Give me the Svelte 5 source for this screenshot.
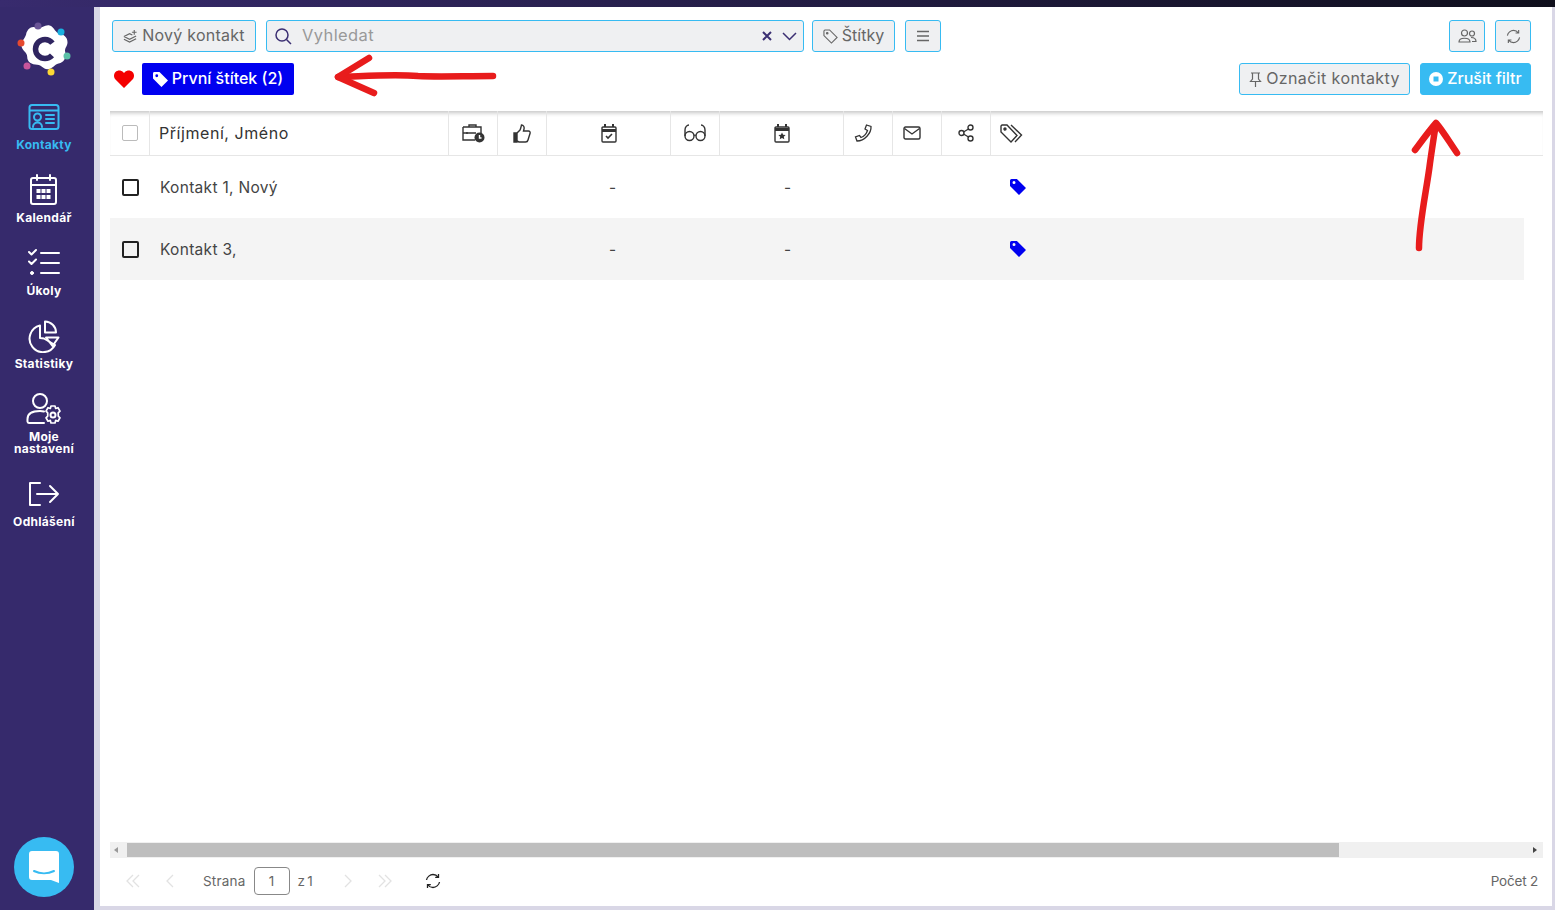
<script>
  const nav = [
    { id: 'contacts', label: 'Kontakty', active: true },
    { id: 'calendar', label: 'Kalendář' },
    { id: 'tasks', label: 'Úkoly' },
    { id: 'stats', label: 'Statistiky' },
    { id: 'settings', label: 'Moje nastavení' },
    { id: 'logout', label: 'Odhlášení' }
  ];
  const rows = ['Kontakt 1, Nový', 'Kontakt 3,'];
  const dots = [
    [38, 26, '#6a5596'], [61, 32, '#19b0e0'], [67, 56, '#5cc0a8'],
    [51, 72, '#fdd835'], [27, 66, '#c9559b'], [21, 43, '#e5492f']
  ];
</script>

<div class="page">
  <div class="topline"></div>
  <div class="frame">
    <aside class="side">
      <svg class="logo" width="88" height="60" viewBox="0 20 88 60">
        <path fill="#fff" transform="translate(44 49) scale(1.12) translate(-44 -49)" d="M37 30c4 2 7-3 12-2 4 1 4 5 8 7 4 1 8 3 8 8 0 4-3 5-2 9 1 5-1 9-6 10-4 1-5 5-10 5-4 0-5-4-9-4-5 0-9-2-9-7 0-4-4-5-5-9-1-5 3-7 4-11 1-5 5-8 9-6z" />
        <circle cx="45" cy="49" r="9.500" fill="none" stroke="#2f2560" stroke-width="5.500" stroke-dasharray="46 13.700" stroke-dashoffset="-7" />
        {#each dots as d}
          <circle cx={d[0]} cy={d[1]} r="3.500" fill={d[2]} />
        {/each}
      </svg>

      {#each nav as n}
        <div class="nav" class:active={n.active}>
          <svg width="36" height="34" viewBox="0 0 36 34" fill="none" stroke="currentColor" stroke-width="2" stroke-linecap="round" stroke-linejoin="round">
            {#if n.id === 'contacts'}
              <rect x="3.500" y="5" width="29" height="24" rx="2.500" />
              <path d="M4 10.500h28M15 17a3.500 3.500 0 1 1-7 0 3.500 3.500 0 0 1 7 0zM7 27c0-6 9-6 9 0M20 15h8M20 19h8M20 23h8" />
            {:else if n.id === 'calendar'}
              <rect x="5" y="5" width="25" height="26" rx="2" />
              <path d="M5 12h25M11 2v5M24 2v5" />
              <g fill="currentColor" stroke="none">
                <rect x="10.500" y="16" width="4" height="4" /><rect x="15.500" y="16" width="4" height="4" /><rect x="20.500" y="16" width="4" height="4" />
                <rect x="10.500" y="22" width="4" height="4" /><rect x="15.500" y="22" width="4" height="4" /><rect x="20.500" y="22" width="4" height="4" />
              </g>
            {:else if n.id === 'tasks'}
              <path d="M15 7h18M15 17h18M15 27h18M3 6l2.500 2.500L10 4M3 15.500L5.500 18 10 13.500" />
              <circle cx="6" cy="27" r="1.500" fill="currentColor" stroke-width="1" />
            {:else if n.id === 'stats'}
              <path d="M14 6.500A13.500 13.500 0 1 0 29 26L18 19.500 14 19z" />
              <path d="M19 2.500c6 0 11 5 11 11H19zM20 18.500h12.500L26.500 27z" />
            {:else if n.id === 'settings'}
              <circle cx="14" cy="9" r="7" />
              <path d="M3 31c-2 0-1.500-3-1.500-4 0-6 6-8 12.500-8 1.500 0 3 .2 4 .5M3 31h15" />
              <circle cx="27" cy="23" r="2.500" />
              <path stroke-width="1.700" d="M25 14h4l.7 2.500 2.300-.8 2 3.400-1.800 1.800.1 3.200 1.700 1.700-2 3.400-2.300-.8-.7 2.600h-4l-.7-2.600-2.300.8-2-3.400 1.700-1.700v-3.200l-1.700-1.800 2-3.400 2.300.8z" />
            {:else}
              <path d="M14 6H4v22h10M11 17h21M24 9l8 8-8 8" />
            {/if}
          </svg>
          <span>{n.label}</span>
        </div>
      {/each}

      <div class="chat">
        <svg width="30" height="32" viewBox="0 0 30 32">
          <path fill="#fff" d="M3 0h24a3 3 0 0 1 3 3v29l-8-3H3a3 3 0 0 1-3-3V3a3 3 0 0 1 3-3z" />
          <path fill="none" stroke="#37bbf2" stroke-width="2" stroke-linecap="round" d="M5 20c6 3 14 3 20 0" />
        </svg>
      </div>
    </aside>

    <main class="main">
      <div class="toolbar">
        <div class="row">
          <button class="btn add">
            <svg width="15" height="15" viewBox="0 0 16 16" fill="none" stroke="currentColor" stroke-width="1.200">
              <path d="M1 8l6-3 3 1.500M1 8l6 3 7-3.500M1 11l6 3 7-3.500M1 8v0M12 1v5M9.500 3.500h5" />
            </svg>
            Nový kontakt
          </button>
          <div class="search">
            <svg class="purple" width="18" height="18" viewBox="0 0 18 18" fill="none" stroke="currentColor" stroke-width="1.500">
              <circle cx="8" cy="8" r="6" /><path d="M12.500 12.500L17 17" />
            </svg>
            <span class="placeholder">Vyhledat</span>
            <svg class="purple" width="12" height="12" viewBox="0 0 12 12" fill="none" stroke="currentColor" stroke-width="2">
              <path d="M2 2l8 8M10 2l-8 8" />
            </svg>
            <svg class="purple" width="15" height="9" viewBox="0 0 15 9" fill="none" stroke="currentColor" stroke-width="1.500">
              <path d="M1 1l6.500 6.500L14 1" />
            </svg>
          </div>
          <button class="btn tags">
            <svg width="15" height="15" viewBox="0 0 16 16" fill="none" stroke="currentColor" stroke-width="1.200">
              <path d="M1 2v5l8 8 6-6-8-8H2z" /><circle cx="4.500" cy="4.500" r=".8" fill="currentColor" />
            </svg>
            Štítky
          </button>
          <button class="btn square menu" aria-label="Menu">
            <svg width="14" height="12" viewBox="0 0 14 12" stroke="currentColor" stroke-width="1.300"><path d="M1 1.500h12M1 6h12M1 10.500h12" /></svg>
          </button>
          <span class="grow"></span>
          <button class="btn square" aria-label="Uživatelé">
            <svg width="19" height="14" viewBox="0 0 19 14" fill="none" stroke="currentColor" stroke-width="1.200">
              <circle cx="6.500" cy="4" r="3" /><circle cx="14" cy="4.500" r="2.500" />
              <path d="M1 13c0-5 11-5 11 0zM13 8.500c3 0 5 1 5 4h-4" />
            </svg>
          </button>
          <button class="btn square" aria-label="Obnovit">
            <svg width="15" height="15" viewBox="0 0 16 16" fill="none" stroke="currentColor" stroke-width="1.200">
              <path d="M1.500 7C2 4 5 1.500 8 1.500c2.500 0 4 1 5 2.500M13.500 1v3.300h-3.300M14.500 9c-.5 3-3.500 5.500-6.500 5.500-2.500 0-4-1-5-2.500M2.500 15v-3.300h3.300" />
            </svg>
          </button>
        </div>
        <div class="row">
          <svg class="heart" width="20" height="18" viewBox="0 0 20 18">
            <path fill="#f40000" d="M10 18L1.500 9.500C-.5 7.500-.5 4 1.500 2s5.500-2 7.500 0l1 1 1-1c2-2 5.500-2 7.500 0s2 5.500 0 7.500z" />
          </svg>
          <button class="chip">
            <svg width="15" height="15" viewBox="0 0 16 16"><path fill="#fff" fill-rule="evenodd" d="M0 1.500A1.500 1.500 0 0 1 1.500 0h5.400L16 9l-7 7L0 7zM4 5.500a1.500 1.500 0 1 0 0-3 1.500 1.500 0 0 0 0 3z" /></svg>
            První štítek (2)
          </button>
          <span class="grow"></span>
          <button class="btn mark">
            <svg width="13" height="15" viewBox="0 0 13 15" fill="none" stroke="currentColor" stroke-width="1.200">
              <path d="M2 1h9M3.500 1v6L1.500 9.500h10L9.500 7V1M6.500 9.500V15" />
            </svg>
            Označit kontakty
          </button>
          <button class="btn clear">
            <svg width="14" height="14" viewBox="0 0 14 14"><path fill="#fff" fill-rule="evenodd" d="M7 0a7 7 0 1 1 0 14A7 7 0 0 1 7 0zM4.500 4.500v5h5v-5z" /></svg>
            Zrušit filtr
          </button>
        </div>
      </div>

      <div class="table">
        <div class="thead">
          <div class="cell check"><span class="box light"></span></div>
          <div class="cell name">Příjmení, Jméno</div>
          <div class="cell"><svg width="24" height="20" viewBox="0 0 24 20" fill="none" stroke="#333" stroke-width="1.400"><path d="M8 4V2h7v2M2 4h18v6M2 4v13h12M2 10h13M6 9v2" /><circle cx="18.500" cy="14.500" r="5" fill="#333" stroke="none" /><path stroke="#fff" d="M18.500 12v3h2" /></svg></div>
          <div class="cell"><svg width="18" height="19" viewBox="0 0 18 19" fill="none" stroke="#333" stroke-width="1.400"><path fill="#333" d="M1 9h3v9H1z" /><path d="M4 9l3-3c1-2 1-3 1.500-5 2 0 3 2 2.500 4l-.5 2h5c1 0 2 1 1.500 2.500L15 16c-.3 1.500-1 2-2.500 2H6l-2-1" /></svg></div>
          <div class="cell"><svg width="16" height="19" viewBox="0 0 16 19" fill="none" stroke="#333" stroke-width="1.400"><rect x="1" y="3" width="14" height="15" rx="1" /><path d="M1 6.500h14" stroke-width="3" /><path d="M4 0v3M12 0v3" stroke-width="2" /><path d="M5 12l2 2 4-4" stroke-width="1.600" /></svg></div>
          <div class="cell"><svg width="22" height="18" viewBox="0 0 22 18" fill="none" stroke="#333" stroke-width="1.400"><circle cx="5.500" cy="12" r="4.500" /><circle cx="16.500" cy="12" r="4.500" /><path d="M10 11.500c1-.8 1-.8 2 0M1 12V6c0-3 2-5 4-5M21 12V6c0-3-2-5-4-5" /></svg></div>
          <div class="cell"><svg width="16" height="19" viewBox="0 0 16 19" fill="none" stroke="#333" stroke-width="1.400"><rect x="1" y="3" width="14" height="15" rx="1" /><path d="M1 5.500h14" stroke-width="3" /><path d="M4 0v3M12 0v3" stroke-width="2" /><path fill="#333" stroke="none" d="M8 8.500l1.100 2.300 2.500.3-1.800 1.700.5 2.500L8 14l-2.300 1.300.5-2.500-1.800-1.700 2.500-.3z" /></svg></div>
          <div class="cell nudge"><svg width="19" height="18" viewBox="0 0 18 18" fill="none" stroke="#333" stroke-width="1.300"><path d="M12 1l4.500 1.500C17 9 10 17 2.500 17L1 13l4-1.500 1.500 2c3-1 5.500-4 6.500-7L10.500 5z" /></svg></div>
          <div class="cell nudge"><svg width="18" height="14" viewBox="0 0 18 14" fill="none" stroke="#333" stroke-width="1.400"><rect x="1" y="1" width="16" height="12" rx="1.500" /><path d="M1.500 2.500L9 8l7.500-5.500" /></svg></div>
          <div class="cell"><svg width="16" height="18" viewBox="0 0 16 18" fill="none" stroke="#333" stroke-width="1.400"><circle cx="12.500" cy="3.500" r="2.500" /><circle cx="3.500" cy="9" r="2.500" /><circle cx="12.500" cy="14.500" r="2.500" /><path d="M5.500 8l5-3M5.500 10l5 3" /></svg></div>
          <div class="cell"><svg width="23" height="19" viewBox="0 0 23 19" fill="none" stroke="#333" stroke-width="1.400"><path d="M1 2v6l10 10 6-6.500L7 1H2zM11 1l10.500 10L15 18" /><circle cx="5" cy="5" r="1" fill="#333" /></svg></div>
        </div>

        {#each rows as r, i}
          <div class="trow" class:odd={i % 2 === 1}>
            <div class="c-check"><span class="box"></span></div>
            <div class="c-name">{r}</div>
            <div class="c-dash first">-</div>
            <div class="c-dash second">-</div>
            <svg class="rowtag" width="16" height="16" viewBox="0 0 16 16"><path fill="#0000f0" fill-rule="evenodd" d="M0 1.500A1.500 1.500 0 0 1 1.500 0h5.400L16 9l-7 7L0 7zM4 5a1.500 1.500 0 1 0 0-3 1.500 1.500 0 0 0 0 3z" /></svg>
          </div>
        {/each}
      </div>

      <div class="hscroll">
        <span class="tri left"></span>
        <div class="track"><div class="thumb"></div></div>
        <span class="tri right"></span>
      </div>

      <footer class="pager">
        <svg class="off first" width="14" height="14" viewBox="0 0 14 14" fill="none" stroke="currentColor" stroke-width="1.300"><path d="M7 1L1 7l6 6M13 1L7 7l6 6" /></svg>
        <svg class="off prev" width="8" height="14" viewBox="0 0 8 14" fill="none" stroke="currentColor" stroke-width="1.300"><path d="M7 1L1 7l6 6" /></svg>
        <span class="lbl">Strana</span>
        <span class="pageno">1</span>
        <span class="lbl of">z 1</span>
        <svg class="off next" width="8" height="14" viewBox="0 0 8 14" fill="none" stroke="currentColor" stroke-width="1.300"><path d="M1 1l6 6-6 6" /></svg>
        <svg class="off last" width="14" height="14" viewBox="0 0 14 14" fill="none" stroke="currentColor" stroke-width="1.300"><path d="M1 1l6 6-6 6M7 1l6 6-6 6" /></svg>
        <svg class="reload" width="16" height="16" viewBox="0 0 16 16" fill="none" stroke="#222" stroke-width="1.300"><path d="M1.500 7C2 4 5 1.500 8 1.500c2.500 0 4 1 5 2.500M13.500 1v3.300h-3.300M14.500 9c-.5 3-3.500 5.500-6.500 5.500-2.500 0-4-1-5-2.500M2.500 15v-3.300h3.300" /></svg>
        <span class="grow"></span>
        <span class="lbl count">Počet 2</span>
      </footer>
    </main>
  </div>

  <!-- red arrows painted over the screenshot -->
  <svg class="marks" width="1555" height="910" fill="none" stroke="#e81c1c" stroke-width="6.500" stroke-linecap="round" stroke-linejoin="round">
    <path d="M493 76c-30 0-55 1-75 0-25-2-50 0-80 1" />
    <path d="M369 58l-31 19 36 16" />
    <path d="M1419 248c0-25 8-60 11-85 2-14 4-28 6-39" />
    <path d="M1415 150c6-8 14-19 21-27 7 8 14 20 21 30" />
  </svg>
</div>

<style>
  :global(body) {
    margin: 0;
    font-family: Inter, "Liberation Sans", sans-serif;
    color: #333;
  }

  .page {
    position: relative;
    width: 1555px;
    height: 910px;
    overflow: hidden;
    background: #d9d7e6;
  }

  .topline {
    height: 7px;
    background: linear-gradient(90deg, #382b6e, #0f0f1c);
  }

  .frame {
    display: flex;
    height: 903px;
  }

  .side {
    flex: 0 0 94px;
    box-sizing: border-box;
    padding-right: 6px;
    display: flex;
    flex-direction: column;
    align-items: center;
    background: #362a6c;
    color: #fff;
  }

  .logo {
    margin-top: 13px;
    margin-bottom: 20px;
  }

  .nav {
    display: flex;
    flex-direction: column;
    align-items: center;
    width: 88px;
    margin-bottom: 22px;
    font-size: 12px;
    line-height: 12px;
    font-weight: 700;
    text-align: center;
  }

  .nav span {
    display: block;
    width: 70px;
    margin-top: 5px;
    letter-spacing: 0.3px;
  }

  .nav.active {
    color: #37bbf2;
  }

  .chat {
    margin-top: auto;
    margin-bottom: 13px;
    width: 60px;
    height: 60px;
    border-radius: 50%;
    background: #37bbf2;
    display: flex;
    align-items: center;
    justify-content: center;
  }

  .main {
    flex: 0 0 1452px;
    margin-left: 6px;
    margin-bottom: 4px;
    background: #fff;
    display: flex;
    flex-direction: column;
    padding: 0 9px 0 10px;
    box-sizing: border-box;
  }

  .toolbar {
    height: 104px;
    padding: 13px 12px 0 2px;
    box-sizing: border-box;
    display: flex;
    flex-direction: column;
    gap: 11px;
  }

  .row {
    display: flex;
    align-items: center;
    height: 32px;
    gap: 10px;
  }

  .grow {
    flex: 1;
  }

  .btn {
    height: 32px;
    display: inline-flex;
    align-items: center;
    justify-content: center;
    gap: 4px;
    padding: 0 0 2px;
    border: 1px solid #37bbf2;
    border-radius: 3px;
    background: #eff0f2;
    color: #666;
    font: 400 16px Inter, "Liberation Sans", sans-serif;
    box-sizing: border-box;
    white-space: nowrap;
  }

  .btn svg {
    margin-top: 2px;
  }

  .btn.add {
    width: 144px;
    letter-spacing: 0.25px;
  }

  .btn.square {
    width: 36px;
    padding: 0;
  }

  .btn.square svg {
    margin-top: 0;
  }

  .btn.mark {
    width: 171px;
    letter-spacing: 0.4px;
  }

  .btn.clear {
    width: 111px;
    background: #37bbf2;
    color: #fff;
    font-weight: 500;
  }

  .btn.tags {
    width: 83px;
    margin-left: -2px;
  }

  .search {
    width: 538px;
    height: 32px;
    display: flex;
    align-items: center;
    gap: 9px;
    padding: 0 6px 0 7px;
    border: 1px solid #37bbf2;
    border-radius: 3px;
    background: #eff0f2;
    box-sizing: border-box;
  }

  .purple {
    color: #3b2f73;
    flex: none;
  }

  .placeholder {
    flex: 1;
    margin-left: 1px;
    padding-bottom: 2px;
    color: #999;
    font-size: 16.500px;
    letter-spacing: 0.4px;
  }

  .heart {
    margin-left: 2px;
    margin-right: -2px;
  }

  .chip {
    height: 32px;
    width: 152px;
    display: inline-flex;
    align-items: center;
    justify-content: center;
    gap: 4px;
    padding: 0 0 2px;
    border: 0;
    border-radius: 2px;
    background: #0000f0;
    color: #fff;
    font: 500 16px Inter, "Liberation Sans", sans-serif;
  }

  .chip svg {
    margin-top: 2px;
  }

  .table {
    flex: 1;
    min-height: 0;
    display: flex;
    flex-direction: column;
  }

  .thead {
    display: grid;
    grid-template-columns: 40px 299px 49px 49px 124px 49px 124px 49px 49px 49px 49px;
    height: 45px;
    border-bottom: 1px solid #e6e6e6;
    box-shadow: inset 0 5px 4px -3px #c4c4c4;
    box-sizing: border-box;
    flex: none;
  }

  .cell {
    display: flex;
    align-items: center;
    justify-content: center;
    border-right: 1px solid #e6e6e6;
  }

  .cell.nudge {
    padding-right: 10px;
  }

  .cell:last-child {
    border-right: 0;
    justify-content: flex-start;
    padding-left: 9px;
  }

  .cell.name {
    justify-content: flex-start;
    padding-left: 9px;
    font-size: 16px;
    letter-spacing: 0.55px;
    color: #333;
  }

  .box {
    display: block;
    width: 13px;
    height: 13px;
    border: 2px solid #222;
    border-radius: 2px;
  }

  .box.light {
    width: 14px;
    height: 14px;
    border: 1px solid #bbb;
  }

  .trow {
    position: relative;
    display: grid;
    grid-template-columns: 40px 299px 124px 176px;
    align-items: center;
    height: 62px;
    width: 1414px;
    flex: none;
    font-size: 15.500px;
    color: #444;
  }

  .trow.odd {
    background: #f4f4f4;
  }

  .c-check {
    display: flex;
    justify-content: center;
    margin-left: 1px;
  }

  .c-name {
    padding-left: 10px;
    letter-spacing: 0.3px;
  }

  .c-dash.first {
    padding-left: 160px;
    width: 80px;
  }

  .c-dash.second {
    padding-left: 211px;
  }

  .rowtag {
    position: absolute;
    left: 900px;
    top: 23px;
  }

  .hscroll {
    display: flex;
    align-items: center;
    height: 16px;
    background: #f0f0f0;
    flex: none;
  }

  .track {
    flex: 1;
    height: 14px;
    margin-left: 9px;
    margin-right: 0;
  }

  .thumb {
    width: 1212px;
    height: 100%;
    background: #bebebe;
  }

  .tri {
    flex: none;
    width: 0;
    height: 0;
    border-top: 3.500px solid transparent;
    border-bottom: 3.500px solid transparent;
  }

  .tri.left {
    margin-left: 4px;
    border-right: 4px solid #999;
  }

  .tri.right {
    margin-right: 6px;
    margin-left: 190px;
    border-left: 4px solid #444;
  }

  .pager {
    height: 48px;
    flex: none;
    display: flex;
    align-items: center;
    font-size: 13.500px;
    padding-right: 5px;
    padding-bottom: 2px;
    box-sizing: border-box;
    color: #666;
  }

  .lbl {
    letter-spacing: 0.2px;
  }

  .lbl.of {
    word-spacing: -2px;
  }

  .lbl.count {
    letter-spacing: -0.2px;
  }

  .off {
    color: #e2e2e2;
    flex: none;
  }

  .off.first {
    margin-left: 16px;
  }

  .off.prev {
    margin-left: 26px;
    margin-right: 29px;
  }

  .off.next {
    margin-left: 31px;
  }

  .off.last {
    margin-left: 26px;
  }

  .pageno {
    width: 36px;
    height: 28px;
    margin: 0 8px;
    display: flex;
    align-items: center;
    justify-content: center;
    border: 1px solid #888;
    border-radius: 4px;
    box-sizing: border-box;
  }

  .reload {
    margin-left: 33px;
  }

  .marks {
    position: absolute;
    left: 0;
    top: 0;
    pointer-events: none;
  }
</style>
